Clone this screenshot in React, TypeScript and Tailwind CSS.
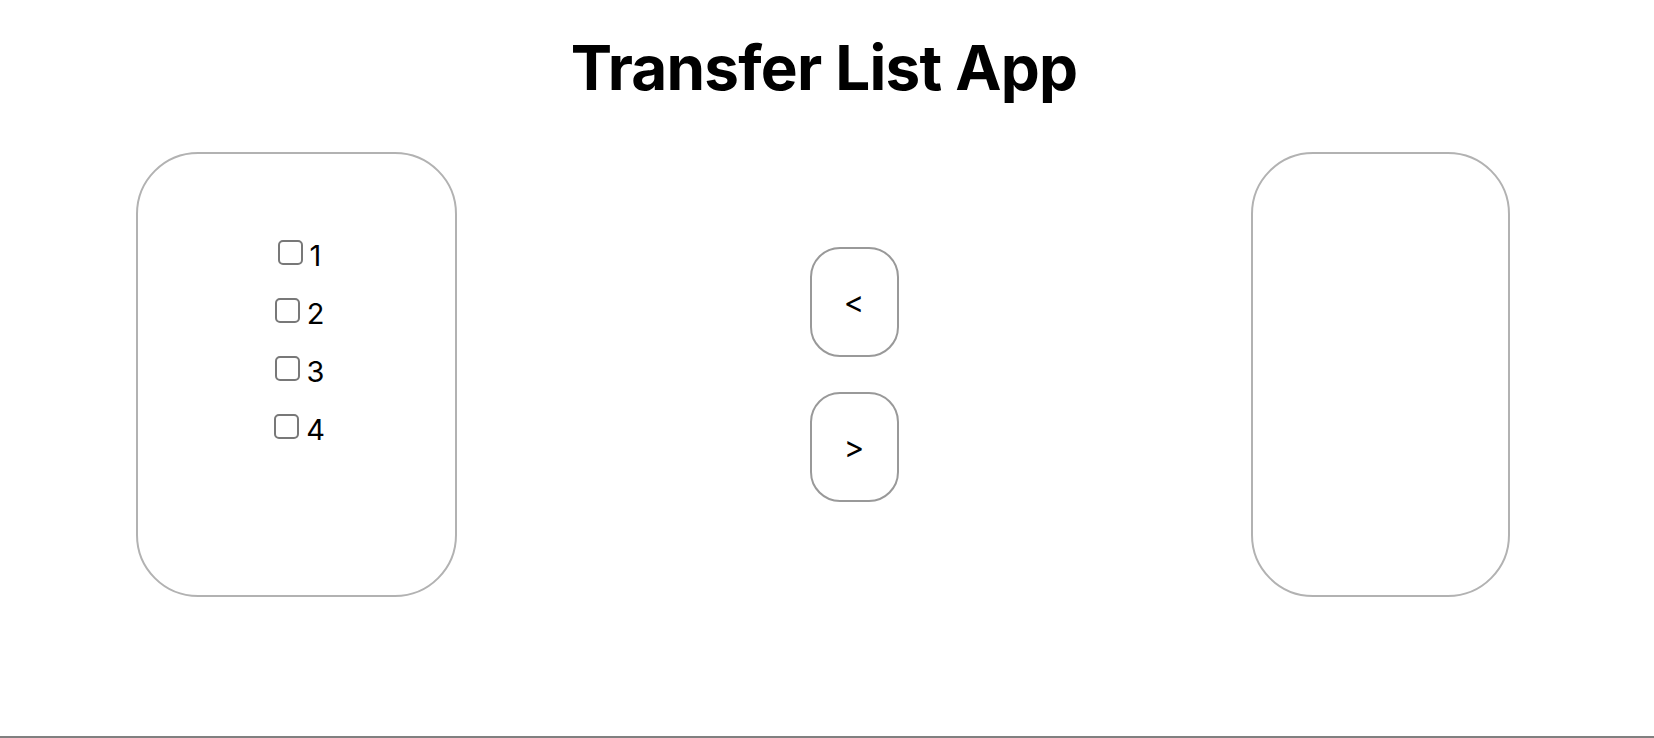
import React, { useState } from "react";

export default function App() {
  const [left, setLeft] = useState<number[]>([1, 2, 3, 4]);
  const [right, setRight] = useState<number[]>([]);
  const [checked, setChecked] = useState<number[]>([]);

  const toggle = (n: number) =>
    setChecked((c) => (c.includes(n) ? c.filter((x) => x !== n) : [...c, n]));

  const moveRight = () => {
    const m = left.filter((n) => checked.includes(n));
    setLeft(left.filter((n) => !checked.includes(n)));
    setRight([...right, ...m]);
    setChecked([]);
  };
  const moveLeft = () => {
    const m = right.filter((n) => checked.includes(n));
    setRight(right.filter((n) => !checked.includes(n)));
    setLeft([...left, ...m]);
    setChecked([]);
  };

  const Item = ({ n }: { n: number }) => (
    <label className="flex h-[58px] items-center justify-center gap-[7px] text-[29px] leading-none text-black">
      <input
        type="checkbox"
        checked={checked.includes(n)}
        onChange={() => toggle(n)}
        className="mb-[5px] h-[25px] w-[25px] appearance-none rounded-[5px] border-2 border-[#787878] bg-white checked:bg-[#0a66d8]"
      />
      <span>{n}</span>
    </label>
  );

  return (
    <div
      className="flex h-[738px] w-full flex-col bg-white"
      style={{ fontFamily: "Inter, 'Noto Sans', sans-serif" }}
    >
      <h1 className="mt-[37px] pr-[6px] text-center text-[62px] font-bold leading-[62px] tracking-[-0.8px] text-black">
        Transfer List App
      </h1>
      <div className="mt-[53px] flex items-center justify-between pl-[136px] pr-[144px]">
        <div className="h-[445px] w-[321px] rounded-[62px] border-2 border-[#b2b2b2] pl-[6px] pt-[72px]">
          {left.map((n) => (
            <Item key={n} n={n} />
          ))}
        </div>
        <div className="flex flex-col gap-[35px]">
          <button
            onClick={moveLeft}
            className="flex h-[110px] w-[89px] items-center justify-center rounded-[30px] border-2 border-[#999999] bg-white text-[31px] text-black"
          >
            &lt;
          </button>
          <button
            onClick={moveRight}
            className="flex h-[110px] w-[89px] items-center justify-center rounded-[30px] border-2 border-[#999999] bg-white text-[31px] text-black"
          >
            &gt;
          </button>
        </div>
        <div className="h-[445px] w-[259px] rounded-[62px] border-2 border-[#b2b2b2] pl-[6px] pt-[72px]">
          {right.map((n) => (
            <Item key={n} n={n} />
          ))}
        </div>
      </div>
      <div className="mt-auto h-[2px] w-full bg-[#808080]" />
    </div>
  );
}
